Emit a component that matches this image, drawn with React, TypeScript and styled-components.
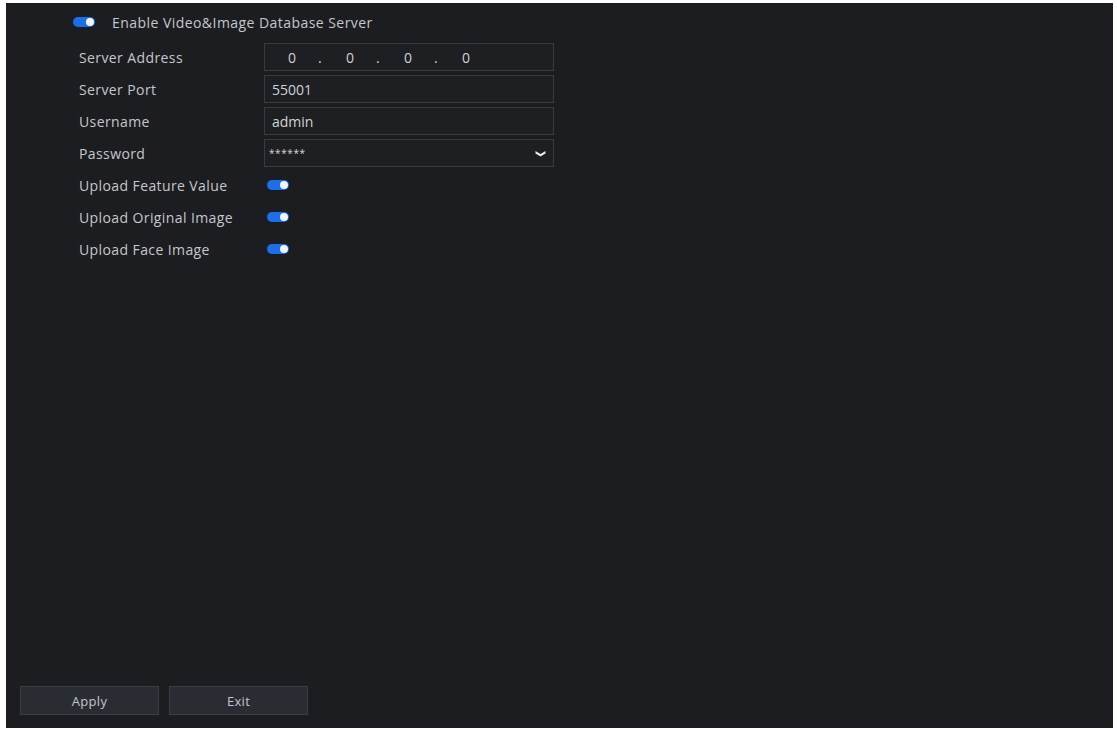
import * as React from 'react';
import styled, { createGlobalStyle } from 'styled-components';

const GlobalStyle = createGlobalStyle`
  html, body {
    margin: 0;
    padding: 0;
    background: #ffffff;
  }
  body {
    font-family: 'Open Sans', 'Liberation Sans', sans-serif;
  }
`;

const Page = styled.div`
  padding: 3px 0 0 6px;
`;

const Panel = styled.div`
  width: 1107px;
  height: 725px;
  box-sizing: border-box;
  background: #1b1d21;
  display: flex;
  flex-direction: column;
  padding: 5px 0 13px 0;
`;

const Form = styled.div`
  flex: 1;
  display: flex;
  flex-direction: column;
  padding-left: 67px;
`;

const HeaderRow = styled.div`
  display: flex;
  align-items: center;
  height: 28px;
  margin-bottom: 7px;
`;

const HeaderText = styled.span`
  margin-left: 17px;
  color: #c6c7c9;
  font-size: 14px;
  letter-spacing: 0.45px;
`;

const Row = styled.div`
  display: flex;
  align-items: center;
  height: 28px;
  margin-bottom: 4px;
`;

const Label = styled.label`
  width: 191px;
  padding-left: 6px;
  box-sizing: border-box;
  color: #c6c7c9;
  font-size: 14px;
  letter-spacing: 0.4px;
`;

const Input = styled.div`
  width: 290px;
  height: 28px;
  box-sizing: border-box;
  border: 1px solid #383b40;
  background: #1d1f23;
  display: flex;
  align-items: center;
  padding: 0 7px;
  color: #d2d3d5;
  font-size: 14px;
`;

const IpSegment = styled.span`
  width: 58px;
  flex: none;
  display: flex;
  padding-left: 16px;
  box-sizing: border-box;
`;

const IpDot = styled.span`
  margin-left: 22px;
`;

const Masked = styled.span`
  flex: 1;
  font-size: 10px;
  letter-spacing: 0.6px;
  color: #d8d8d8;
  margin-left: -3px;
`;

const Toggle = styled.span<{ $on: boolean; $inset?: number }>`
  position: relative;
  display: inline-block;
  width: 22px;
  height: 10px;
  margin-left: ${(p) => p.$inset || 0}px;
  border-radius: 5px;
  background: ${(p) => (p.$on ? '#1d6fe8' : '#4a4d52')};
  &::after {
    content: '';
    position: absolute;
    top: 1px;
    left: ${(p) => (p.$on ? '13px' : '1px')};
    width: 8px;
    height: 8px;
    border-radius: 50%;
    background: #f1f3f6;
  }
`;

const Footer = styled.div`
  display: flex;
  gap: 10px;
  padding-left: 14px;
`;

const Button = styled.button`
  width: 139px;
  height: 29px;
  box-sizing: border-box;
  background: #292c32;
  border: 1px solid #3b3e45;
  color: #c3c5c8;
  font-family: 'Open Sans', 'Liberation Sans', sans-serif;
  font-size: 13px;
  letter-spacing: 0.3px;
  cursor: pointer;
`;

const Chevron = () => (
  <svg width="11" height="7" viewBox="0 0 11 7">
    <path d="M0.5 1 L5.5 4 L10.5 1 L10.5 3.5 L5.5 6.5 L0.5 3.5 Z" fill="#e8e9eb" />
  </svg>
);

const TextField: React.FC<{ label: string; children: React.ReactNode }> = ({ label, children }) => (
  <Row>
    <Label>{label}</Label>
    <Input>{children}</Input>
  </Row>
);

const SwitchField: React.FC<{ label: string }> = ({ label }) => (
  <Row>
    <Label>{label}</Label>
    <Toggle $on $inset={3} />
  </Row>
);

export default function App() {
  return (
    <Page>
      <GlobalStyle />
      <Panel>
        <Form>
          <HeaderRow>
            <Toggle $on />
            <HeaderText>Enable Video&amp;Image Database Server</HeaderText>
          </HeaderRow>
          <TextField label="Server Address">
            {[0, 1, 2, 3].map((i) => (
              <IpSegment key={i}>
                <span>0</span>
                {i < 3 && <IpDot>.</IpDot>}
              </IpSegment>
            ))}
          </TextField>
          <TextField label="Server Port">55001</TextField>
          <TextField label="Username">admin</TextField>
          <TextField label="Password">
            <Masked>******</Masked>
            <Chevron />
          </TextField>
          <SwitchField label="Upload Feature Value" />
          <SwitchField label="Upload Original Image" />
          <SwitchField label="Upload Face Image" />
        </Form>
        <Footer>
          <Button>Apply</Button>
          <Button>Exit</Button>
        </Footer>
      </Panel>
    </Page>
  );
}
